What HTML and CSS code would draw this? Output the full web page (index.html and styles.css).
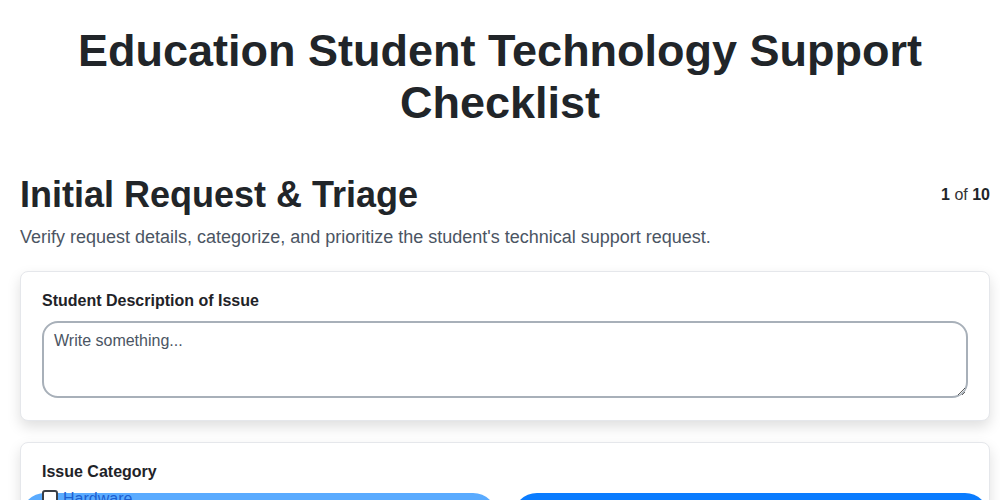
FILE: index.html
```html
<!DOCTYPE html>
<html lang="en">
<head>
  <meta charset="UTF-8" />
  <meta name="viewport" content="width=device-width, initial-scale=1.0"/>
  <title>Education Student Technology Support Checklist</title>
  <link rel="stylesheet" href="styles.css">
</head>
<body>
  <h1 class="page-title">Education Student Technology Support Checklist</h1>

  <main class="step">
    <div class="step-head">
      <h2>Initial Request &amp; Triage</h2>
      <span class="step-count"><b>1</b> of <b>10</b></span>
    </div>
    <p class="step-desc">Verify request details, categorize, and prioritize the student's technical support request.</p>

    <!-- Description -->
    <div class="card">
      <label class="field-label" for="desc">Student Description of Issue</label>
      <textarea id="desc" placeholder="Write something..."></textarea>
    </div>

    <!-- Category -->
    <div class="card">
      <span class="field-label">Issue Category</span>
      <div class="options">
        <div class="option option-light">
          <label class="check"><span class="box"></span> Hardware</label>
        </div>
        <div class="option option-blue"></div>
      </div>
    </div>
  </main>
</body>
</html>
```

FILE: styles.css
```css
* { margin: 0; padding: 0; box-sizing: border-box; }
body {
  font-family: 'Liberation Sans', Arial, sans-serif;
  color: #212529;
  background: #fff;
}
.page-title {
  font-size: 45px;
  line-height: 52px;
  text-align: center;
  padding: 25px 60px 0;
}
.step { padding: 44px 10px 40px 20px; }
.step-head {
  display: flex;
  justify-content: space-between;
  align-items: center;
}
.step-head h2 { font-size: 36px; line-height: 44px; }
.step-count { font-size: 16px; color: #333; }
.step-count b { color: #212529; }
.step-desc {
  font-size: 18px;
  color: #4b5563;
  margin-top: 10px;
  margin-bottom: 23px;
}
.card {
  border: 1px solid #e5e7eb;
  border-radius: 8px;
  background: #fff;
  box-shadow: 0 6px 14px rgba(0, 0, 0, 0.13);
  padding: 20px 21px 22px;
  margin-bottom: 21px;
}
.field-label {
  display: block;
  font-size: 16px;
  font-weight: bold;
  color: #1f2328;
  margin-bottom: 11px;
}
textarea {
  display: block;
  width: 100%;
  height: 77px;
  border: 2px solid #a8b0b9;
  border-radius: 16px;
  padding: 9px 10px;
  font-family: inherit;
  font-size: 16px;
  color: #333;
  resize: vertical;
}
textarea::placeholder { color: #4b5563; }
.options {
  display: grid;
  grid-template-columns: 1fr 1fr;
  gap: 16px;
  margin: 12px -21px 0;
}
.option {
  height: 48px;
  border-radius: 24px;
}
.option-light { background: #5aabff; padding-left: 21px; }
.option-blue { background: #0a7cff; }
.check {
  display: flex;
  align-items: flex-start;
  gap: 5px;
  margin-top: -3px;
  font-size: 16px;
  line-height: 18px;
  color: #1d5fd0;
}
.box {
  width: 16px;
  height: 16px;
  border: 2px solid #3a3f47;
  border-radius: 3px;
  background: #fff;
  flex-shrink: 0;
}
```
